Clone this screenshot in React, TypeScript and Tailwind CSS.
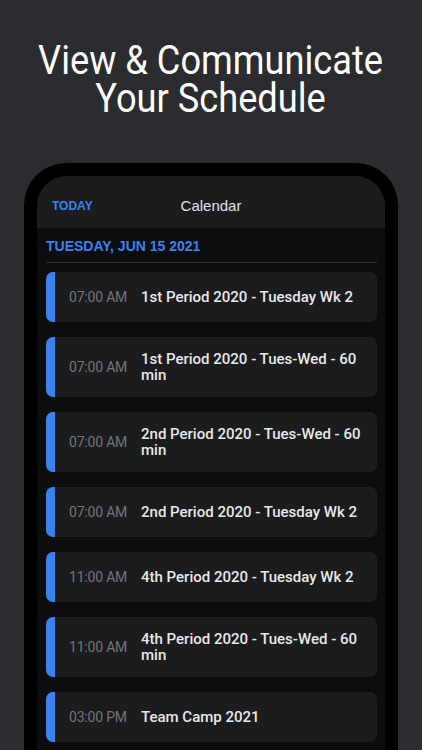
const events = [
  { time: "07:00 AM", title: "1st Period 2020 - Tuesday Wk 2" },
  { time: "07:00 AM", title: "1st Period 2020 - Tues-Wed - 60 min" },
  { time: "07:00 AM", title: "2nd Period 2020 - Tues-Wed - 60 min" },
  { time: "07:00 AM", title: "2nd Period 2020 - Tuesday Wk 2" },
  { time: "11:00 AM", title: "4th Period 2020 - Tuesday Wk 2" },
  { time: "11:00 AM", title: "4th Period 2020 - Tues-Wed - 60 min" },
  { time: "03:00 PM", title: "Team Camp 2021" },
]

function EventCard({ time, title }: { time: string; title: string }) {
  return (
    <div className="flex min-h-[50px] rounded-[7px] bg-[#1b1c1e] overflow-hidden">
      <div className="w-[9px] shrink-0 bg-[#3b82f0]" />
      <div className="flex flex-1 items-center py-[14px] pl-[14px] pr-[12px]">
        <span className="w-[72px] shrink-0 text-[14px] tracking-[-0.2px] text-[#747578] font-['Roboto',sans-serif]">
          {time}
        </span>
        <span className="text-[15px] leading-[16px] font-medium text-[#e8e8ea] font-['Roboto',sans-serif]">
          {title}
        </span>
      </div>
    </div>
  )
}

export default function App() {
  return (
    <div className="w-[422px] h-[750px] overflow-hidden bg-[#2a2c2f] flex flex-col items-center font-['Liberation_Sans',Arial,sans-serif]">
      <h1 className="mt-[42px] whitespace-nowrap text-center text-[40px] leading-[38px] text-white scale-x-[0.905] font-['Roboto',sans-serif]">
        View &amp; Communicate
        <br />
        Your Schedule
      </h1>

      <div className="mt-[45px] w-[374px] flex-1 rounded-t-[42px] bg-black px-[13px] pt-[13px]">
        <div className="h-full rounded-t-[30px] bg-[#0c0d0f] overflow-hidden">
          <div className="grid h-[52px] grid-cols-[1fr_auto_1fr] items-center bg-[#1b1c1e] px-[15px] pt-[8px]">
            <span className="text-[12px] font-bold text-[#3b82f0]">TODAY</span>
            <span className="text-[15px] text-[#e2e2e4]">Calendar</span>
            <span />
          </div>

          <div className="pl-[9px] pr-[8px]">
            <div className="border-b border-[#2c2d30] pt-[6px] pb-[4px]">
              <span className="text-[14px] font-bold text-[#3b82f0]">TUESDAY, JUN 15 2021</span>
            </div>
            <div className="mt-[9px] flex flex-col gap-[15px]">
              {events.map((e, i) => (
                <EventCard key={i} time={e.time} title={e.title} />
              ))}
            </div>
          </div>
        </div>
      </div>
    </div>
  )
}
